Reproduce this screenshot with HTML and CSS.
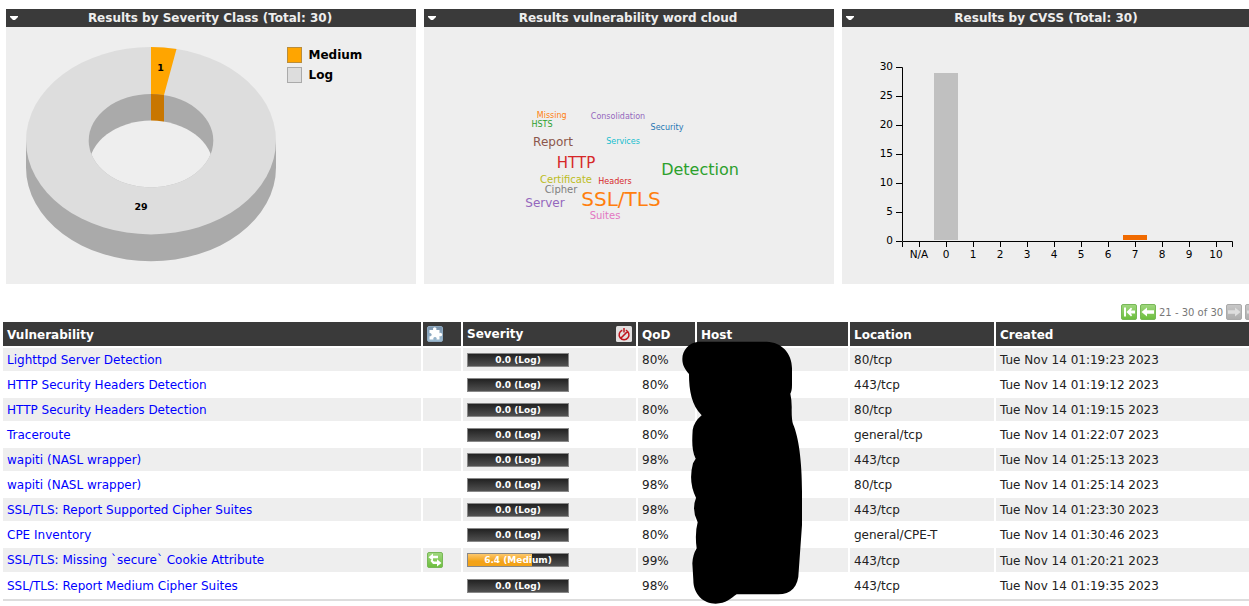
FILE: index.html
```html
<!DOCTYPE html>
<html lang="en">
<head>
<meta charset="utf-8">
<title>Results</title>
<link rel="stylesheet" href="styles.css">
</head>
<body>
<main class="page">
<section class="dashboard">
  <article class="panel">
    <header class="panel-head"><i class="caret"></i><h2>Results by Severity Class (Total: 30)</h2></header>
    <svg class="chart" viewBox="6 27 410 257">
      <defs>
        <linearGradient id="green" x2="0" y2="1"><stop stop-color="#a0d880"/><stop offset="1" stop-color="#6cbe3c"/></linearGradient>
        <linearGradient id="grey" x2="0" y2="1"><stop stop-color="#c8c8c8"/><stop offset="1" stop-color="#adadad"/></linearGradient>
        <linearGradient id="blue" x2="0" y2="1"><stop stop-color="#7892ab"/><stop offset="1" stop-color="#9dbcd2"/></linearGradient>
      </defs>
      <path fill="#aaa" d="M26 141v26.500a125 93.700 0 0 0 250 0v-26.500z"/>
      <ellipse cx="151" cy="140.700" rx="125" ry="93.700" fill="#ddd"/>
      <path fill="#ffa500" d="M151 141V47A125 93.700 0 0 1 176.500 49.100L164 95V141z"/>
      <clipPath id="hole"><ellipse cx="151" cy="140.700" rx="62.300" ry="46.700"/></clipPath>
      <g clip-path="url(#hole)">
        <rect x="88" y="93" width="126" height="96" fill="#aaa"/>
        <rect x="151" y="93" width="13" height="40" fill="#c87600"/>
        <ellipse cx="151" cy="167.300" rx="62.300" ry="46.700" fill="#eee"/>
      </g>
      <g class="slice-label"><text x="160.500" y="71">1</text><text x="141" y="210">29</text></g>
      <rect x="287.500" y="47.500" width="14" height="15" fill="#ffa500" stroke="#b98d3c"/>
      <rect x="287.500" y="67.500" width="14" height="15" fill="#ddd" stroke="#aaa"/>
      <g class="legend"><text x="308.500" y="59">Medium</text><text x="308.500" y="79">Log</text></g>
    </svg>
  </article>
  <article class="panel">
    <header class="panel-head"><i class="caret"></i><h2>Results vulnerability word cloud</h2></header>
    <svg class="chart cloud" viewBox="424 27 410 257">
      <text x="551.700" y="118" font-size="8" fill="#ff7f0e">Missing</text>
      <text x="542" y="127" font-size="8" fill="#2ca02c">HSTS</text>
      <text x="618" y="119" font-size="8" fill="#9467bd">Consolidation</text>
      <text x="667" y="130" font-size="8" fill="#1f77b4">Security</text>
      <text x="553" y="146" font-size="12" fill="#8c564b">Report</text>
      <text x="623" y="144" font-size="8" fill="#17becf">Services</text>
      <text x="576" y="168" font-size="15" fill="#d62728">HTTP</text>
      <text x="700" y="175" font-size="16" fill="#2ca02c">Detection</text>
      <text x="566" y="183" font-size="10" fill="#bcbd22">Certificate</text>
      <text x="615" y="184" font-size="8" fill="#d62728">Headers</text>
      <text x="561" y="193" font-size="10" fill="#7f7f7f">Cipher</text>
      <text x="545" y="207" font-size="12" fill="#9467bd">Server</text>
      <text x="621" y="206" font-size="20" fill="#ff7f0e">SSL/TLS</text>
      <text x="605" y="219" font-size="10" fill="#e377c2">Suites</text>
    </svg>
  </article>
  <article class="panel">
    <header class="panel-head"><i class="caret"></i><h2>Results by CVSS (Total: 30)</h2></header>
    <svg class="chart" viewBox="842 27 410 257">
      <rect x="934" y="73" width="24" height="167" fill="#c0c0c0"/>
      <rect x="1123" y="235" width="24" height="5" fill="#f06a00"/>
      <path fill="none" stroke="#000" d="M896 67.500h6.500v173.500M896 241.500h6M896 96.500h6M896 125.500h6M896 154.500h6M896 183.500h6M896 212.500h6M902.500 247v-5.500h330v5.500M919.500 241v6M946.500 241v6M973.500 241v6M1000.500 241v6M1027.500 241v6M1054.500 241v6M1081.500 241v6M1108.500 241v6M1135.500 241v6M1162.500 241v6M1189.500 241v6M1216.500 241v6"/>
      <g class="axis-y"><text x="893" y="70">30</text><text x="893" y="99">25</text><text x="893" y="128">20</text><text x="893" y="157">15</text><text x="893" y="186">10</text><text x="893" y="215">5</text><text x="893" y="244">0</text></g>
      <g class="axis-x"><text x="919" y="258">N/A</text><text x="946" y="258">0</text><text x="973" y="258">1</text><text x="1000" y="258">2</text><text x="1027" y="258">3</text><text x="1054" y="258">4</text><text x="1081" y="258">5</text><text x="1108" y="258">6</text><text x="1135" y="258">7</text><text x="1162" y="258">8</text><text x="1189" y="258">9</text><text x="1216" y="258">10</text></g>
    </svg>
  </article>
</section>

<nav class="pager">
  <svg class="icon" viewBox="0 0 16 16"><rect x=".5" y=".5" width="15" height="15" rx="1.500" fill="url(#green)" stroke="#78b858"/><path fill="#fff" d="M3 3.500h2v9H3zM5.500 8L10 3.500l1.200 1.200L9.800 6.500H14v3H9.800l1.400 1.800L10 12.500z"/></svg>
  <svg class="icon" viewBox="0 0 16 16"><rect x=".5" y=".5" width="15" height="15" rx="1.500" fill="url(#green)" stroke="#78b858"/><path fill="#fff" d="M1.500 8L7 3.500v2.700h7v3.600H7v2.700z"/></svg>
  <span>21 - 30 of 30</span>
  <svg class="icon" viewBox="0 0 16 16"><rect x=".5" y=".5" width="15" height="15" rx="1.500" fill="url(#grey)" stroke="#aaa"/><path fill="#dedede" d="M14.500 8L9 3.500v2.700H2v3.600h7v2.700z"/></svg>
  <svg class="icon" viewBox="0 0 16 16"><rect x=".5" y=".5" width="15" height="15" rx="1.500" fill="url(#grey)" stroke="#aaa"/><path fill="#dedede" d="M11 3.500h2v9h-2zM10.500 8L6 3.500v3H2v3h4v3z"/></svg>
</nav>

<section class="results">
  <div class="row head">
    <div>Vulnerability</div>
    <div><svg class="icon" viewBox="0 0 16 16"><rect x=".5" y=".5" width="15" height="15" rx="1.500" fill="url(#blue)" stroke="#8fa9bf"/><path fill="#fff" d="M2.500 4h3.700a1.800 1.800 0 1 1 3 0H12.500v3.200a1.700 1.700 0 1 1 0 2.800V13.500H9.500a1.700 1.700 0 1 0-3 0H2.500V10.200a1.600 1.600 0 1 0 0-3z"/></svg></div>
    <div class="sev-head"><span>Severity</span><svg class="icon" viewBox="0 0 16 16"><rect width="16" height="16" rx="1.500" fill="#e2e0e0"/><g fill="none" stroke="#c0161e" stroke-width="1.500"><path d="M6.300 4.200a4.900 4.900 0 1 0 3.500 0M8 2v4.500M4.800 12.200L11.600 5.400"/></g></svg></div>
    <div>QoD</div><div>Host</div><div>Location</div><div>Created</div>
  </div>
  <div class="row"><div><a>Lighttpd Server Detection</a></div><div></div><div><b class="bar"><span>0.0 (Log)</span></b></div><div>80%</div><div></div><div>80/tcp</div><div>Tue Nov 14 01:19:23 2023</div></div>
  <div class="row"><div><a>HTTP Security Headers Detection</a></div><div></div><div><b class="bar"><span>0.0 (Log)</span></b></div><div>80%</div><div></div><div>443/tcp</div><div>Tue Nov 14 01:19:12 2023</div></div>
  <div class="row"><div><a>HTTP Security Headers Detection</a></div><div></div><div><b class="bar"><span>0.0 (Log)</span></b></div><div>80%</div><div></div><div>80/tcp</div><div>Tue Nov 14 01:19:15 2023</div></div>
  <div class="row"><div><a>Traceroute</a></div><div></div><div><b class="bar"><span>0.0 (Log)</span></b></div><div>80%</div><div></div><div>general/tcp</div><div>Tue Nov 14 01:22:07 2023</div></div>
  <div class="row"><div><a>wapiti (NASL wrapper)</a></div><div></div><div><b class="bar"><span>0.0 (Log)</span></b></div><div>98%</div><div></div><div>443/tcp</div><div>Tue Nov 14 01:25:13 2023</div></div>
  <div class="row"><div><a>wapiti (NASL wrapper)</a></div><div></div><div><b class="bar"><span>0.0 (Log)</span></b></div><div>98%</div><div></div><div>80/tcp</div><div>Tue Nov 14 01:25:14 2023</div></div>
  <div class="row"><div><a>SSL/TLS: Report Supported Cipher Suites</a></div><div></div><div><b class="bar"><span>0.0 (Log)</span></b></div><div>98%</div><div></div><div>443/tcp</div><div>Tue Nov 14 01:23:30 2023</div></div>
  <div class="row"><div><a>CPE Inventory</a></div><div></div><div><b class="bar"><span>0.0 (Log)</span></b></div><div>80%</div><div></div><div>general/CPE-T</div><div>Tue Nov 14 01:30:46 2023</div></div>
  <div class="row tall"><div><a>SSL/TLS: Missing `secure` Cookie Attribute</a></div><div><svg class="icon" viewBox="0 0 16 16"><rect x=".5" y=".5" width="15" height="15" rx="1.500" fill="url(#green)" stroke="#78b858"/><path fill="#fff" d="M1.500 5.200L6 1.500v2.200h5v2.600H6v2.500zM14.500 11L10 7.200v2.400L7 9.500 4.500 7.500 3.500 9 6 12h4v2.500z"/></svg></div><div><b class="bar"><i class="fill" style="width:64%"></i><span>6.4 (Medium)</span></b></div><div class="low">99%</div><div></div><div class="low">443/tcp</div><div class="low">Tue Nov 14 01:20:21 2023</div></div>
  <div class="row"><div><a>SSL/TLS: Report Medium Cipher Suites</a></div><div></div><div><b class="bar"><span>0.0 (Log)</span></b></div><div>98%</div><div></div><div>443/tcp</div><div>Tue Nov 14 01:19:35 2023</div></div>
</section>
<svg class="redaction" viewBox="0 0 600 873"><path d="M85 80H290C335 81 366 115 366 160V210Q366 228 361 236Q366 258 365 285Q365 315 369 327C386 365 396 440 396 530V630L386 770C386 815 362 838 325 838H200C182 850 168 866 137 866C100 866 70 838 70 795L67 745Q68 720 80 700Q74 655 83 622Q64 585 78 548Q54 500 69 445L77 431C65 405 66 380 68 345Q72 320 95 301C65 270 57 228 57 177C45 163 37 151 37 132C37 105 57 83 85 80Z"/></svg>
</main>
</body>
</html>
```
FILE: styles.css
```css
* { box-sizing: border-box; }
body {
  margin: 0;
  overflow: hidden;
  background: #fff;
  color: #222;
  font: 12px/14px "DejaVu Sans", sans-serif;
}
.page { position: relative; width: 1270px; height: 606px; overflow: hidden; }
.dashboard { display: grid; grid-template-columns: repeat(3, 410px); gap: 8px; padding: 9px 0 0 6px; }
.panel { height: 275px; background: #eee; }
.panel-head { display: flex; align-items: center; height: 18px; background: #3a3a3a; color: #eee; }
.panel-head h2 { flex: 1; margin: 0 14px 0 0; font-size: 12px; line-height: 18px; text-align: center; }
.caret { width: 8px; height: 4px; margin-left: 4px; background: #fff; clip-path: polygon(0 0, 100% 0, 100% 25%, 62% 100%, 38% 100%, 0 25%); }
.chart { display: block; width: 410px; height: 257px; }
.slice-label { font-size: 9.5px; font-weight: bold; text-anchor: middle; }
.legend { font-size: 12px; font-weight: bold; }
.cloud { text-anchor: middle; }
.axis-y { font-size: 10.5px; text-anchor: end; }
.axis-x { font-size: 10.5px; text-anchor: middle; }
.pager { display: flex; align-items: center; height: 16px; margin: 20px 0 2px 1121px; color: #777; font-size: 10px; white-space: nowrap; }
.pager .icon + .icon { margin-left: 3px; }
.pager span { width: 70px; padding: 1px 0 0 3px; }
.icon { display: block; flex: none; width: 16px; height: 16px; }
.results { display: grid; gap: 2px; width: 1267px; padding-left: 3px; }
.results::after { content: ""; height: 2px; background: #ddd; }
.row { display: grid; grid-template-columns: 418px 38px 173px 57px 151px 144px 1fr; gap: 2px; height: 23px; }
.row > div { display: flex; align-items: center; padding: 0 4px; }
.row:nth-child(even) > div { background: #eee; }
.row.tall { height: 24px; }
.row > .low { padding-top: 1px; }
.row.head { height: 24px; color: #fff; font-weight: bold; }
.row.head > div { background: #3a3a3a; padding-top: 1px; }
.row.head > div:nth-child(2), .row.head > .sev-head { padding-top: 0; }
.row.head > .sev-head { justify-content: space-between; }
.row a { color: #00f; }
.bar { position: relative; width: 102px; height: 14px; border: 1px solid #888; background: linear-gradient(#222, #505050); color: #fff; font-size: 9px; line-height: 12px; text-align: center; }
.bar span { position: relative; }
.fill { position: absolute; left: 0; top: 0; height: 12px; background: linear-gradient(#fcc76c, #f3a318 60%); }
.redaction { position: absolute; left: 670px; top: 315px; width: 200px; height: 291px; }
```
